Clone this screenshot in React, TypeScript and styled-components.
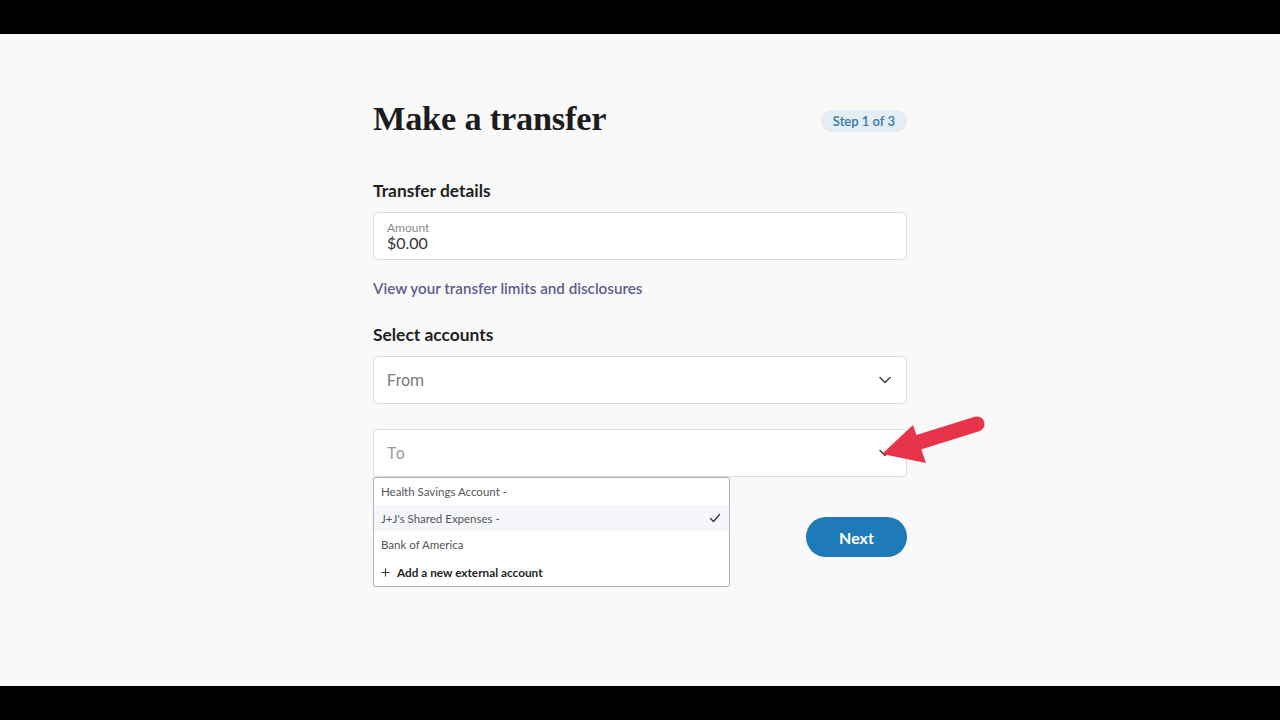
import React from 'react';
import styled, { createGlobalStyle } from 'styled-components';

const GlobalStyle = createGlobalStyle`
  html, body {
    margin: 0;
    padding: 0;
    background: #000;
  }
  body {
    font-family: Lato, "Open Sans", sans-serif;
  }
`;

const Screen = styled.div`
  width: 1280px;
  height: 720px;
  background: #000;
  display: flex;
  flex-direction: column;
  justify-content: center;
`;

const Stage = styled.div`
  position: relative;
  height: 652px;
  background: #f9f9f9;
  display: flex;
  justify-content: center;
`;

const Column = styled.div`
  width: 534px;
  padding-top: 64px;
  display: flex;
  flex-direction: column;
`;

const Header = styled.div`
  display: flex;
  justify-content: space-between;
  align-items: center;
  margin-bottom: 43px;
`;

const Title = styled.h1`
  margin: 0;
  font-family: "Liberation Serif", "DejaVu Serif", serif;
  font-weight: 700;
  font-size: 34.3px;
  line-height: 40px;
  color: #1c1c1c;
  letter-spacing: -0.2px;
`;

const StepBadge = styled.span`
  display: inline-flex;
  align-items: center;
  height: 22px;
  padding: 0 12px;
  border-radius: 11px;
  background: #e2edf4;
  color: #3778a6;
  font-size: 13px;
  font-weight: 600;
  margin-top: 6px;
`;

const SectionTitle = styled.h2`
  margin: 0 0 11px;
  font-size: 17.4px;
  font-weight: 700;
  line-height: 20px;
  color: #1f1f1f;
`;

const Field = styled.div<{ $gap?: number }>`
  height: 48px;
  box-sizing: border-box;
  background: #fff;
  border: 1px solid #dcdcdc;
  border-radius: 4px;
  display: flex;
  align-items: center;
  padding: 0 13px;
  margin-bottom: ${p => p.$gap ?? 0}px;
`;

const AmountField = styled(Field)`
  flex-direction: column;
  align-items: flex-start;
  justify-content: center;
`;

const FieldLabel = styled.span`
  font-size: 12px;
  line-height: 13px;
  color: #8a8a8a;
`;

const FieldValue = styled.span`
  font-size: 16px;
  line-height: 18px;
  color: #333;
`;

const Link = styled.a`
  margin: 19px 0 28px;
  font-size: 15.2px;
  line-height: 18px;
  font-weight: 600;
  color: #5e5d8c;
  text-decoration: none;
`;

const SelectText = styled.span<{ $light?: boolean }>`
  flex: 1;
  font-family: Roboto, "Liberation Sans", sans-serif;
  font-size: 16px;
  color: ${p => (p.$light ? '#9a9a9a' : '#7a7a7a')};
`;

const Chevron = styled.svg`
  width: 14px;
  height: 14px;
  margin-right: 1px;
`;

const SelectWrap = styled.div`
  position: relative;
`;

const Menu = styled.ul`
  position: absolute;
  left: 0;
  top: 48px;
  width: 357px;
  box-sizing: border-box;
  margin: 0;
  padding: 0;
  list-style: none;
  background: #fff;
  border: 1px solid #a7b4bf;
  border-radius: 2px;
  z-index: 2;
`;

const MenuItem = styled.li<{ $active?: boolean; $strong?: boolean }>`
  height: ${p => (p.$active ? 26 : p.$strong ? 28 : 27)}px;
  display: flex;
  align-items: center;
  padding: 0 8px 0 7px;
  font-size: ${p => (p.$strong ? 11.8 : 11.5)}px;
  color: ${p => (p.$strong ? '#1f1f1f' : '#555')};
  font-weight: ${p => (p.$strong ? 700 : 400)};
  background: ${p => (p.$active ? '#f4f6f9' : 'transparent')};
  gap: 7px;
  span {
    flex: 1;
  }
`;

const Actions = styled.div`
  display: flex;
  justify-content: flex-end;
  margin-top: 40px;
`;

const NextButton = styled.button`
  width: 101px;
  height: 40px;
  border: none;
  border-radius: 20px;
  background: #1f7ab8;
  color: #fff;
  font-family: Lato, sans-serif;
  font-size: 16px;
  font-weight: 700;
`;

const Pointer = styled.svg`
  position: absolute;
  left: 875px;
  top: 376px;
  width: 115px;
  height: 60px;
  overflow: visible;
`;

const ChevronIcon = () => (
  <Chevron viewBox="0 0 14 14" fill="none">
    <path d="M2 4.5 L7 9.5 L12 4.5" stroke="#444" strokeWidth="1.6" strokeLinecap="round" strokeLinejoin="round" />
  </Chevron>
);

const accounts = ['Health Savings Account -', "J+J's Shared Expenses -", 'Bank of America'];

const App = () => {
  return (
    <>
      <GlobalStyle />
      <Screen>
        <Stage>
          <Column>
            <Header>
              <Title>Make a transfer</Title>
              <StepBadge>Step 1 of 3</StepBadge>
            </Header>

            <SectionTitle>Transfer details</SectionTitle>
            <AmountField>
              <FieldLabel>Amount</FieldLabel>
              <FieldValue>$0.00</FieldValue>
            </AmountField>

            <Link href="#">View your transfer limits and disclosures</Link>

            <SectionTitle>Select accounts</SectionTitle>
            <Field $gap={25}>
              <SelectText>From</SelectText>
              <ChevronIcon />
            </Field>

            <SelectWrap>
              <Field>
                <SelectText $light>To</SelectText>
                <ChevronIcon />
              </Field>
              <Menu>
                {accounts.map((name, i) => (
                  <MenuItem key={name} $active={i === 1}>
                    <span>{name}</span>
                    {i === 1 && (
                      <svg width="12" height="12" viewBox="0 0 12 12" fill="none">
                        <path d="M1.5 6.5 L4.5 9.5 L10.5 2.5" stroke="#333" strokeWidth="1.3" strokeLinecap="round" strokeLinejoin="round" />
                      </svg>
                    )}
                  </MenuItem>
                ))}
                <MenuItem $strong>
                  <svg width="9" height="9" viewBox="0 0 9 9">
                    <path d="M4.5 0.5 V8.5 M0.5 4.5 H8.5" stroke="#333" strokeWidth="1.1" />
                  </svg>
                  <span>Add a new external account</span>
                </MenuItem>
              </Menu>
            </SelectWrap>

            <Actions>
              <NextButton>Next</NextButton>
            </Actions>
          </Column>

          <Pointer viewBox="0 0 115 60">
            <path d="M38 34 L102 14" stroke="#e8344a" strokeWidth="15" strokeLinecap="round" />
            <polygon points="7,44 38,15 51,53" fill="#e8344a" />
          </Pointer>
        </Stage>
      </Screen>
    </>
  );
};

export default App;
